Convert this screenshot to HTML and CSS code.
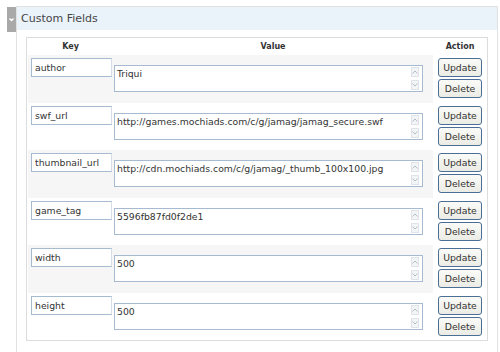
FILE: index.html
```html
<!DOCTYPE html>
<html lang="en">
<head>
    <meta charset="UTF-8">
    <title>Custom Fields</title>
    <link rel="stylesheet" href="styles.css">
</head>
<body>
    <div class="postbox">
        <div class="handle">
            <svg width="9" height="25" viewBox="0 0 9 25"><path d="M2.5 11.5 L4.5 13.5 L6.5 11.5" fill="none" stroke="#fff" stroke-width="1.4"/></svg>
        </div>
        <div class="box">
            <h3 class="box-title">Custom Fields</h3>
            <div class="inside">
                <table class="meta-table">
                    <thead>
                        <tr>
                            <th class="col-key">Key</th>
                            <th class="col-value">Value</th>
                            <th class="col-action">Action</th>
                        </tr>
                    </thead>
                    <tbody>
                        <tr class="alt">
                            <td class="key-cell"><input type="text" class="key-input" value="author"></td>
                            <td class="value-cell">
                                <div class="value-box"><textarea class="value-text">Triqui</textarea><div class="fake-scroll"><span class="arrow up"></span><span class="arrow down"></span></div></div>
                            </td>
                            <td class="action-cell"><button class="btn">Update</button><button class="btn">Delete</button></td>
                        </tr>
                        <tr>
                            <td class="key-cell"><input type="text" class="key-input" value="swf_url"></td>
                            <td class="value-cell">
                                <div class="value-box"><textarea class="value-text">http://games.mochiads.com/c/g/jamag/jamag_secure.swf</textarea><div class="fake-scroll"><span class="arrow up"></span><span class="arrow down"></span></div></div>
                            </td>
                            <td class="action-cell"><button class="btn">Update</button><button class="btn">Delete</button></td>
                        </tr>
                        <tr class="alt">
                            <td class="key-cell"><input type="text" class="key-input" value="thumbnail_url"></td>
                            <td class="value-cell">
                                <div class="value-box"><textarea class="value-text">http://cdn.mochiads.com/c/g/jamag/_thumb_100x100.jpg</textarea><div class="fake-scroll"><span class="arrow up"></span><span class="arrow down"></span></div></div>
                            </td>
                            <td class="action-cell"><button class="btn">Update</button><button class="btn">Delete</button></td>
                        </tr>
                        <tr>
                            <td class="key-cell"><input type="text" class="key-input" value="game_tag"></td>
                            <td class="value-cell">
                                <div class="value-box"><textarea class="value-text">5596fb87fd0f2de1</textarea><div class="fake-scroll"><span class="arrow up"></span><span class="arrow down"></span></div></div>
                            </td>
                            <td class="action-cell"><button class="btn">Update</button><button class="btn">Delete</button></td>
                        </tr>
                        <tr class="alt">
                            <td class="key-cell"><input type="text" class="key-input" value="width"></td>
                            <td class="value-cell">
                                <div class="value-box"><textarea class="value-text">500</textarea><div class="fake-scroll"><span class="arrow up"></span><span class="arrow down"></span></div></div>
                            </td>
                            <td class="action-cell"><button class="btn">Update</button><button class="btn">Delete</button></td>
                        </tr>
                        <tr>
                            <td class="key-cell"><input type="text" class="key-input" value="height"></td>
                            <td class="value-cell">
                                <div class="value-box"><textarea class="value-text">500</textarea><div class="fake-scroll"><span class="arrow up"></span><span class="arrow down"></span></div></div>
                            </td>
                            <td class="action-cell"><button class="btn">Update</button><button class="btn">Delete</button></td>
                        </tr>
                    </tbody>
                </table>
            </div>
        </div>
    </div>
</body>
</html>
```

FILE: styles.css
```css
* {
    margin: 0;
    padding: 0;
    box-sizing: border-box;
}

body {
    background: #fff;
    font-family: "DejaVu Sans", Verdana, sans-serif;
    font-size: 9.3px;
    color: #333;
}

.postbox {
    display: flex;
    align-items: flex-start;
    margin: 6px 0 0 7px;
    width: 491px;
}

.handle {
    width: 9px;
    height: 25px;
    margin-top: 1px;
    background: #a9a9a9;
}

.handle svg {
    display: block;
}

.box {
    flex: 1;
    border: 1px solid #e1e1e1;
    border-bottom: none;
    height: 346px;
}

.box-title {
    height: 23px;
    line-height: 23px;
    padding-left: 4px;
    background: #eaf2fa;
    font-size: 11px;
    font-weight: normal;
    color: #464646;
}

.inside {
    padding: 7px 9px 0 9px;
}

.meta-table {
    width: 100%;
    border: 1px solid #dcdcdc;
    border-collapse: separate;
    border-spacing: 0;
    padding: 0 0 0 1px;
    table-layout: fixed;
}

.meta-table th {
    height: 17px;
    font-size: 8px;
    font-weight: bold;
    color: #333;
    text-align: center;
    vertical-align: middle;
}

.col-key {
    width: 85px;
}

.col-value {
    width: 320px;
}

.meta-table td {
    vertical-align: top;
}

.meta-table tbody tr {
    height: 48px;
}

.meta-table tbody tr:nth-child(even) {
    height: 47px;
}

.meta-table tr.alt .key-cell,
.meta-table tr.alt .value-cell {
    background: #f6f6f6;
}

.key-cell {
    padding: 3px 0 0 3px;
}

.key-input {
    display: block;
    width: 81px;
    height: 19px;
    padding: 0 3px;
    border: 1px solid #a6bad1;
    border-right-color: #d4dde8;
    background: #fff;
    font-family: "DejaVu Sans", Verdana, sans-serif;
    font-size: 9.3px;
    color: #333;
    outline: none;
}

.value-cell {
    padding: 10px 0 0 1px;
}

.value-box {
    display: flex;
    width: 309px;
    height: 27px;
    border: 1px solid #a6bad1;
    background: #fff;
}

.value-text {
    flex: 1;
    border: none;
    resize: none;
    overflow: hidden;
    padding: 2px 2px 0 2px;
    font-family: "DejaVu Sans", Verdana, sans-serif;
    font-size: 9.3px;
    line-height: 11px;
    color: #333;
    white-space: nowrap;
    outline: none;
}

.fake-scroll {
    display: flex;
    flex-direction: column;
    justify-content: space-between;
    width: 8px;
    margin-right: 3px;
    padding: 1px 0;
}

.arrow {
    display: block;
    width: 8px;
    height: 10px;
    border: 1px solid #dfe4ea;
    background: #f3f4f6 center no-repeat;
}

.arrow.up {
    background-image: url("data:image/svg+xml,%3Csvg xmlns='http://www.w3.org/2000/svg' width='6' height='4'%3E%3Cpath d='M0.5 3.5 L3 1 L5.5 3.5' fill='none' stroke='%23b4bcc6' stroke-width='1'/%3E%3C/svg%3E");
}

.arrow.down {
    background-image: url("data:image/svg+xml,%3Csvg xmlns='http://www.w3.org/2000/svg' width='6' height='4'%3E%3Cpath d='M0.5 0.5 L3 3 L5.5 0.5' fill='none' stroke='%23b4bcc6' stroke-width='1'/%3E%3C/svg%3E");
}

.action-cell {
    padding-top: 3px;
    text-align: center;
}

.btn {
    display: block;
    width: 44px;
    height: 19px;
    margin: 0 auto 2px auto;
    border: 1px solid #4b6e94;
    border-radius: 3px;
    background: linear-gradient(#fafaf7, #ecece6);
    font-family: "DejaVu Sans", Verdana, sans-serif;
    font-size: 9.3px;
    color: #333;
    cursor: pointer;
}
```
